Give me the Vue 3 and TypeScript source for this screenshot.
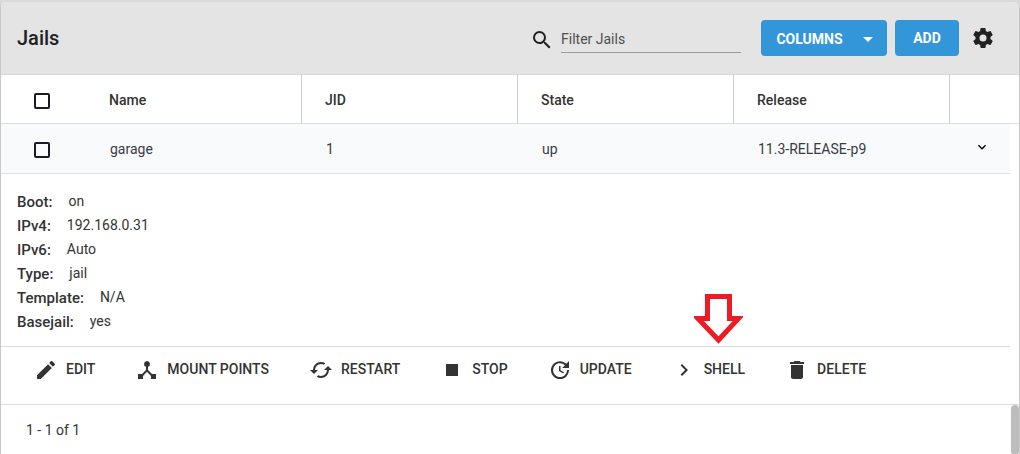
<script setup lang="ts">
import { ref } from 'vue'

interface Jail {
  name: string
  jid: string
  state: string
  release: string
  details: { label: string; value: string }[]
}

interface Action {
  id: string
  label: string
  path: string
}

const filter = ref('')
const columns = ['Name', 'JID', 'State', 'Release']

const jails: Jail[] = [
  {
    name: 'garage',
    jid: '1',
    state: 'up',
    release: '11.3-RELEASE-p9',
    details: [
      { label: 'Boot:', value: 'on' },
      { label: 'IPv4:', value: '192.168.0.31' },
      { label: 'IPv6:', value: 'Auto' },
      { label: 'Type:', value: 'jail' },
      { label: 'Template:', value: 'N/A' },
      { label: 'Basejail:', value: 'yes' },
    ],
  },
]

const actions: Action[] = [
  {
    id: 'edit',
    label: 'EDIT',
    path: 'M3 17.25V21h3.75L17.81 9.94l-3.75-3.75L3 17.25zM20.71 7.04a1 1 0 0 0 0-1.41l-2.34-2.34a1 1 0 0 0-1.41 0l-1.83 1.83 3.75 3.75 1.83-1.83z',
  },
  {
    id: 'mount',
    label: 'MOUNT POINTS',
    path: 'M17 16l-4-4V8.82A3 3 0 0 0 12 3a3 3 0 0 0-1 5.82V12l-4 4H3v5h5v-3.05l4-4.2 4 4.2V21h5v-5h-4z',
  },
  {
    id: 'restart',
    label: 'RESTART',
    path: 'M19 8l-4 4h3a6 6 0 0 1-6 6c-1 0-1.97-.25-2.8-.7l-1.46 1.46A7.93 7.93 0 0 0 12 20a8 8 0 0 0 8-8h3l-4-4zM6 12a6 6 0 0 1 6-6c1 0 1.97.25 2.8.7l1.46-1.46A7.93 7.93 0 0 0 12 4a8 8 0 0 0-8 8H1l4 4 4-4H6z',
  },
  { id: 'stop', label: 'STOP', path: 'M6 6h12v12H6z' },
  {
    id: 'update',
    label: 'UPDATE',
    path: 'M21 10.12h-6.78l2.74-2.82c-2.73-2.7-7.15-2.8-9.88-.1a6.87 6.87 0 0 0 0 9.8c2.73 2.7 7.15 2.7 9.88 0 1.36-1.35 2.04-2.92 2.04-4.9h2c0 1.98-.88 4.55-2.64 6.29-3.51 3.48-9.21 3.48-12.72 0-3.5-3.47-3.53-9.11-.02-12.58 3.51-3.47 9.14-3.47 12.65 0L21 3v7.12zM12.5 8v4.25l3.5 2.08-.72 1.21L11 13V8h1.5z',
  },
  {
    id: 'shell',
    label: 'SHELL',
    path: 'M10 6L8.59 7.41 13.17 12l-4.58 4.59L10 18l6-6z',
  },
  {
    id: 'delete',
    label: 'DELETE',
    path: 'M6 19c0 1.1.9 2 2 2h8c1.1 0 2-.9 2-2V7H6v12zM19 4h-3.5l-1-1h-5l-1 1H5v2h14V4z',
  },
]
</script>

<template>
  <main class="card">
    <header class="toolbar">
      <h1>Jails</h1>
      <label class="search" for="filter">
        <svg class="icon" viewBox="0 0 24 24" aria-hidden="true">
          <path d="M15.5 14h-.79l-.28-.27A6.47 6.47 0 0 0 16 9.5 6.5 6.5 0 1 0 9.5 16c1.61 0 3.09-.59 4.23-1.57l.27.28v.79l5 4.99L20.49 19l-4.99-5zm-6 0a4.5 4.5 0 1 1 0-9 4.5 4.5 0 0 1 0 9z" />
        </svg>
      </label>
      <input id="filter" v-model="filter" class="filter" type="text" placeholder="Filter Jails" aria-label="Filter Jails" />
      <button class="primary columns" type="button">
        COLUMNS
        <svg class="icon" viewBox="0 0 24 24" aria-hidden="true"><path d="M7 10l5 5 5-5z" /></svg>
      </button>
      <button class="primary add" type="button">ADD</button>
      <button class="gear" type="button" aria-label="Settings">
        <svg class="icon" viewBox="0 0 24 24" aria-hidden="true">
          <path d="M12 15.5A3.5 3.5 0 0 1 8.5 12 3.5 3.5 0 0 1 12 8.5a3.5 3.5 0 0 1 3.5 3.5 3.5 3.5 0 0 1-3.5 3.5m7.43-2.53c.04-.32.07-.64.07-.97s-.03-.66-.07-1l2.11-1.63c.19-.15.24-.42.12-.64l-2-3.46c-.12-.22-.39-.31-.61-.22l-2.49 1c-.52-.39-1.06-.73-1.69-.98l-.37-2.65A.506.506 0 0 0 14 2h-4c-.25 0-.46.18-.5.42l-.37 2.65c-.63.25-1.17.59-1.69.98l-2.49-1c-.22-.09-.49 0-.61.22l-2 3.46c-.13.22-.07.49.12.64L4.57 11c-.04.34-.07.67-.07 1s.03.65.07.97l-2.11 1.66c-.19.15-.25.42-.12.64l2 3.46c.12.22.39.3.61.22l2.49-1.01c.52.4 1.06.74 1.69.99l.37 2.65c.04.24.25.42.5.42h4c.25 0 .46-.18.5-.42l.37-2.65c.63-.26 1.17-.59 1.69-.99l2.49 1.01c.22.08.49 0 .61-.22l2-3.46c.12-.22.07-.49-.12-.64l-2.11-1.66z" />
        </svg>
      </button>
    </header>

    <table>
      <colgroup>
        <col class="col-check" />
        <col v-for="column in columns" :key="column" />
        <col class="col-toggle" />
        <col class="col-gutter" />
      </colgroup>
      <thead>
        <tr>
          <th class="check"><input type="checkbox" aria-label="Select all jails" /></th>
          <th v-for="column in columns" :key="column" class="title" scope="col">{{ column }}</th>
          <th colspan="2"></th>
        </tr>
      </thead>
      <tbody>
        <template v-for="jail in jails" :key="jail.name">
          <tr class="jail">
            <td class="check"><input type="checkbox" :aria-label="`Select ${jail.name}`" /></td>
            <td>{{ jail.name }}</td>
            <td>{{ jail.jid }}</td>
            <td>{{ jail.state }}</td>
            <td>{{ jail.release }}</td>
            <td class="toggle">
              <button type="button" aria-label="Collapse details">
                <svg viewBox="0 0 24 24" aria-hidden="true"><path d="M7.41 8.59L12 13.17l4.59-4.58L18 10l-6 6-6-6z" /></svg>
              </button>
            </td>
          </tr>
          <tr>
            <td class="expanded" colspan="6">
              <dl>
                <div v-for="item in jail.details" :key="item.label">
                  <dt>{{ item.label }}</dt>
                  <dd>{{ item.value }}</dd>
                </div>
              </dl>
              <div class="actions">
                <button v-for="action in actions" :key="action.id" type="button">
                  <svg class="icon" viewBox="0 0 24 24" aria-hidden="true"><path :d="action.path" /></svg>
                  {{ action.label }}
                  <svg v-if="action.id === 'shell'" class="pointer" viewBox="0 0 49 50" aria-hidden="true">
                    <path d="M13.500 2.500h22v22h9L24.500 46 4 24.500h9.500z" />
                  </svg>
                </button>
              </div>
            </td>
          </tr>
        </template>
      </tbody>
    </table>

    <footer>
      <span>1 - 1 of 1</span>
      <div class="thumb"></div>
    </footer>
  </main>
</template>

<style>
body {
  background: #d9d9d9;
}
</style>

<style scoped>
* {
  box-sizing: border-box;
}

.card {
  display: flex;
  flex-direction: column;
  min-height: calc(100vh - 2px);
  margin-top: 2px;
  border: 0 solid #c8c8c8;
  border-width: 0 1px;
  border-radius: 5px 5px 0 0;
  overflow: hidden;
  background: #fff;
  color: #333;
  font: 400 14px/20px Roboto, 'Liberation Sans', sans-serif;
}

button,
input {
  margin: 0;
  font: inherit;
  color: inherit;
}

button {
  border: 0;
  padding: 0;
  background: none;
  cursor: pointer;
}

.icon {
  flex: none;
  display: block;
  width: 24px;
  height: 24px;
  fill: currentColor;
}

.toolbar {
  display: flex;
  align-items: center;
  height: 73px;
  padding: 0 24px 0 16px;
  border-bottom: 1px solid #d8d8d8;
  background: #e4e4e4;
  color: #212121;
}

h1 {
  margin: 0 auto 0 0;
  font-size: 20px;
  font-weight: 500;
  line-height: 24px;
}

.search {
  margin: 4px 7px 0 0;
}

.filter {
  width: 180px;
  height: 30px;
  margin-right: 20px;
  padding: 2px 0 0;
  border: 0;
  border-bottom: 1px solid #9d9d9d;
  outline: 0;
  background: none;
}

.filter::placeholder {
  color: #4f4f4f;
  opacity: 1;
}

.primary {
  display: flex;
  align-items: center;
  justify-content: center;
  height: 36px;
  margin-right: 8px;
  border-radius: 4px;
  background: #3296d9;
  color: #fff;
  font-weight: 700;
}

.columns {
  gap: 13px;
  width: 126px;
  padding: 2px 0 0 8px;
}

.add {
  width: 64px;
  margin-right: 12px;
}

table {
  width: 100%;
  table-layout: fixed;
  border-spacing: 0;
}

.col-check {
  width: 85px;
}

.col-toggle {
  width: 60px;
}

.col-gutter {
  width: 9px;
}

th {
  height: 49px;
  padding: 2px 0 0;
  border-bottom: 1px solid #dcdfe2;
  text-align: left;
  font-weight: 500;
}

.title {
  padding-left: 23px;
  border-right: 1px solid #ccc;
}

td {
  padding: 0;
}

.jail td {
  height: 50px;
  padding-left: 24px;
  border-bottom: 1px solid #e0e2e5;
  background: #f9fafc;
  color: #3a3a42;
}

.check input {
  appearance: none;
  display: block;
  width: 16px;
  height: 16px;
  margin-top: 2px;
  border: 2px solid #1a1a2a;
  border-radius: 2px;
}

th.check,
.jail .check {
  padding-left: 33px;
}

.jail .toggle {
  padding-bottom: 4px;
}

.toggle button,
.toggle svg {
  display: block;
  width: 16px;
  height: 16px;
}

dl {
  margin: 0;
  padding: 16px 16px 12px;
  border-bottom: 1px solid #dcdcdc;
}

dl div {
  display: flex;
  gap: 16px;
  line-height: 24px;
}

dt {
  font-size: 15px;
  font-weight: 500;
}

dd {
  margin: 0;
  line-height: 22px;
}

.actions {
  display: flex;
  gap: 40px;
  padding: 11px 32px 22px 33px;
}

.actions button {
  position: relative;
  display: flex;
  align-items: flex-start;
  gap: 8px;
  font-weight: 500;
  line-height: 22px;
  white-space: nowrap;
}

.pointer {
  position: absolute;
  left: 22px;
  bottom: 38px;
  width: 49px;
  height: 50px;
  fill: #fff;
  stroke: #ed1c24;
  stroke-width: 5px;
}

footer {
  display: flex;
  flex: 1;
  justify-content: space-between;
  border-top: 1px solid #dcdcdc;
}

footer span {
  padding: 15px 25px;
}

.thumb {
  width: 8px;
  border-radius: 4px;
  background: #bdbdbd;
}
</style>
